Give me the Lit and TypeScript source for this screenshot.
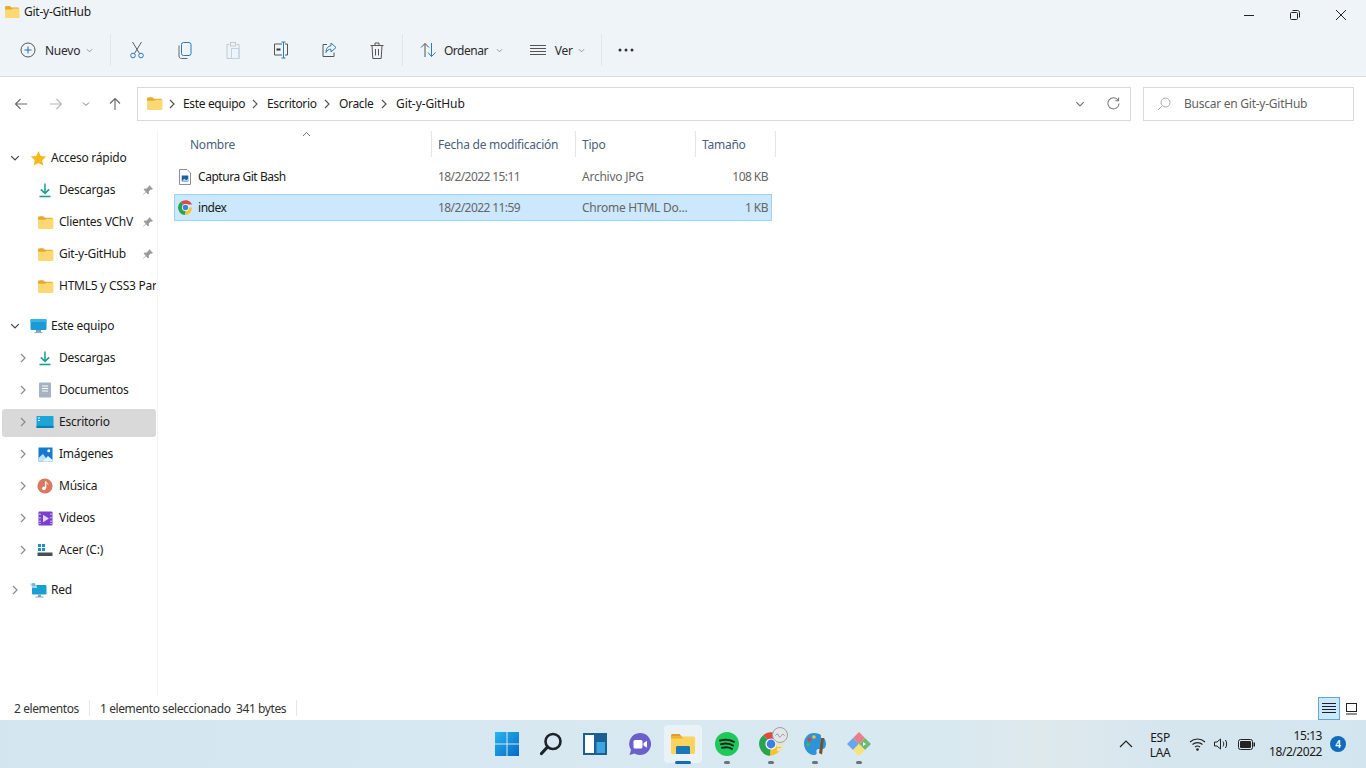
import { html, css, LitElement, nothing } from 'lit';
import { customElement } from 'lit/decorators.js';

// small shared icons
const folder = (size = 16) => html`<svg width=${size} height=${size} viewBox="0 0 16 16">
  <path d="M1 3.500C1 2.700 1.600 2 2.400 2h3.500l1.600 1.600h6.200c.8 0 1.300.6 1.300 1.300V6H1z" fill="#e8a92c" />
  <path d="M1 5.400h6.600L9 4.400h5.600c.5 0 .9.4.9.9v7.600c0 .7-.5 1.100-1.100 1.100H2.100C1.500 14 1 13.500 1 12.900z" fill="#fcd873" />
</svg>`;

const chevronDown = (c = '#666', s = 8) => html`<svg width=${s} height=${s} viewBox="0 0 8 8">
  <path d="M1 2.500l3 3 3-3" fill="none" stroke=${c} stroke-width="1" />
</svg>`;

const chevronRight = (c = '#8a8a8a') => html`<svg width="8" height="10" viewBox="0 0 8 10">
  <path d="M2 1l4 4-4 4" fill="none" stroke=${c} stroke-width="1.200" />
</svg>`;

const download = html`<svg width="16" height="16" viewBox="0 0 16 16">
  <path d="M8 1.500v9.500M3.800 7.400L8 11.400l4.200-4" fill="none" stroke="#1f9d8f" stroke-width="1.500" />
  <path d="M2.500 14.500h11" stroke="#1f9d8f" stroke-width="1.600" />
</svg>`;

const pin = html`<svg width="12" height="12" viewBox="0 0 12 12">
  <path d="M7 1l4 4-1 .6-1.200-.2L6.800 7.600 7 9.500 6 10.400 4 8.200 1.500 10.800 1 10.400l2.700-2.700L1.600 5.600l1-1 1.800.2 2.200-2.200z" fill="#9a9a9a" />
</svg>`;

const star = html`<svg width="17" height="17" viewBox="0 0 17 17">
  <path d="M8.500 1l2.300 5 5.400.6-4 3.600 1.100 5.400-4.800-2.700-4.800 2.700 1.100-5.400-4-3.600 5.400-.6z" fill="#f6b91d" />
</svg>`;

const monitor = html`<svg width="17" height="16" viewBox="0 0 17 16">
  <rect x="0.500" y="1" width="16" height="11" rx="1.200" fill="#1b9ad6" />
  <rect x="0.500" y="1" width="16" height="3" rx="1.200" fill="#35b4e8" />
  <path d="M6 12h5v2H6z" fill="#7fa3b8" /><path d="M4.500 14h8v1h-8z" fill="#8fb0c2" />
</svg>`;

const docs = html`<svg width="14" height="16" viewBox="0 0 14 16">
  <rect x="1" y="0.500" width="12" height="15" rx="0.800" fill="#a5b2c0" />
  <path d="M4 4h6M4 6.500h6M4 9h6" stroke="#fff" stroke-width="1" />
</svg>`;

const desktop = html`<svg width="18" height="14" viewBox="0 0 18 14">
  <rect x="0.500" y="1" width="17" height="12" rx="0.800" fill="#1ca6d8" />
  <rect x="0.500" y="10.800" width="17" height="2.200" fill="#0f7fb2" />
  <path d="M2 3h2M2 5.500h2" stroke="#fff" stroke-width="1.200" />
</svg>`;

const images = html`<svg width="15" height="15" viewBox="0 0 15 15">
  <rect x="0.500" y="0.500" width="14" height="14" fill="#1579d0" />
  <circle cx="10.800" cy="3.800" r="1.500" fill="#fff" />
  <path d="M0.500 14.500V11l4.500-4 5.500 7.500z" fill="#bfe4fa" /><path d="M5 14.500L10 9l4.500 4v1.500z" fill="#e7f6ff" />
</svg>`;

const music = html`<svg width="16" height="16" viewBox="0 0 16 16">
  <circle cx="8" cy="8" r="7.600" fill="#d9785f" />
  <path d="M8.600 3.500v6.600" stroke="#fff" stroke-width="1.300" /><path d="M8.600 3.500c.5 1.500 2 1.600 2.400 3" fill="none" stroke="#fff" stroke-width="1" />
  <circle cx="6.900" cy="10.400" r="1.800" fill="#fff" />
</svg>`;

const videos = html`<svg width="15" height="15" viewBox="0 0 15 15">
  <rect x="0.500" y="0.500" width="14" height="14" rx="1" fill="#7b3fd0" />
  <path d="M5 3.800l6 3.700-6 3.700z" fill="#e6d5fb" />
  <path d="M2 2.500v1.600M2 6v1.600M2 9.500v1.600M2 12v1M13 2.500v1.600M13 6v1.600M13 9.500v1.600M13 12v1" stroke="#e6d5fb" stroke-width="1.100" />
</svg>`;

const drive = html`<svg width="16" height="14" viewBox="0 0 16 14">
  <path d="M1 1h3v3H1zM5 1h3v3H5zM1 5h3v3H1zM5 5h3v3H5z" fill="#1a8fc8" />
  <rect x="0.500" y="9.500" width="15" height="3.500" fill="#4a4f55" />
</svg>`;

const network = html`<svg width="18" height="17" viewBox="0 0 18 17">
  <rect x="3" y="3" width="14.500" height="9.500" rx="1" fill="#18a0d2" />
  <path d="M9 12.500h3v2H9zM6.500 14.500h8v1h-8z" fill="#7fa3b8" />
  <path d="M1 1.500h5l1.200 1.500 1 3H3.500z" fill="#9fdcf2" /><path d="M3 1h3v3H3z" fill="#5a9ec0" opacity=".6" />
</svg>`;

const fileJpg = html`<svg width="14" height="16" viewBox="0 0 14 16">
  <path d="M1.500.5h7.500l3.500 3.500v11.500h-11z" fill="#fff" stroke="#8b8f94" />
  <rect x="3.700" y="6.500" width="6.600" height="6" fill="#1d5fa0" />
  <path d="M3.700 12.500l2.500-3 2 1.700 2.100-1.800v3.100z" fill="#9ed0f0" />
</svg>`;

const chrome = (size = 16) => html`<svg width=${size} height=${size} viewBox="0 0 24 24">
  <path d="M12 12L4.500 2.900A11.800 11.800 0 0 1 22.600 7H12z" fill="#de4a3c" />
  <path d="M12 12H22.600A11.800 11.800 0 0 1 11 23.800z" fill="#f6c42b" />
  <path d="M12 12L11 23.800A11.800 11.800 0 0 1 4.500 2.900z" fill="#2ca24f" />
  <circle cx="12" cy="12" r="5.600" fill="#fff" /><circle cx="12" cy="12" r="4.400" fill="#3a80e8" />
</svg>`;

@customElement('app-root')
export class AppRoot extends LitElement {
  static styles = css`
    :host {
      display: flex;
      flex-direction: column;
      width: 1366px;
      height: 768px;
      overflow: hidden;
      background: #fff;
      color: #1a1a1a;
      font-family: 'Noto Sans', 'Open Sans', sans-serif;
      font-size: 12px;
      letter-spacing: -0.25px;
      line-height: 16px;
    }
    svg {
      display: block;
      flex: none;
    }

    /* title + command bar */
    .head {
      background: #eff4f9;
      border-bottom: 1px solid #dcdcdc;
      height: 76px;
      flex: none;
    }
    .title {
      display: flex;
      align-items: center;
      height: 24px;
      padding: 0 2px 0 4px;
    }
    .title .name {
      margin-left: 4px;
    }
    .winbtns {
      margin-left: auto;
      display: flex;
      margin-top: 5px;
    }
    .winbtns span {
      width: 46px;
      display: flex;
      justify-content: center;
    }
    .bar {
      display: flex;
      align-items: center;
      height: 52px;
      padding-left: 20px;
    }
    .nuevo {
      display: flex;
      align-items: center;
      width: 90px;
    }
    .bar .label {
      margin-left: 9px;
      padding-top: 2px;
      color: #2b2b2b;
    }
    .bar .caret {
      margin-left: 6px;
    }
    .sep {
      width: 1px;
      height: 32px;
      background: #e2e6ea;
      flex: none;
    }
    .sep.cut {
      margin-right: 2px;
    }
    .sep.mid {
      margin-left: 1px;
    }
    .sep.end {
      margin-left: 16px;
    }
    .tool {
      width: 48px;
      display: flex;
      justify-content: center;
      flex: none;
    }
    .sort {
      display: flex;
      align-items: center;
      flex: none;
    }
    .sort.by {
      margin-left: 17px;
    }
    .sort.by .label {
      margin-left: 7px;
      letter-spacing: -0.5px;
    }
    .sort.by .caret {
      margin-left: 8px;
    }
    .sort.view {
      margin-left: 27px;
    }
    .sort.view .label {
      margin-left: 9px;
    }
    .sort.view .caret {
      margin-left: 5px;
    }

    /* address row */
    .nav {
      display: flex;
      align-items: center;
      height: 53px;
      flex: none;
      padding: 0 12px 0 0;
    }
    .navbtn {
      display: flex;
      justify-content: center;
      flex: none;
    }
    .navbtn.back {
      width: 42px;
    }
    .navbtn.fwd {
      width: 28px;
    }
    .navbtn.hist {
      width: 32px;
    }
    .navbtn.up {
      width: 26px;
    }
    .addr {
      display: flex;
      align-items: center;
      width: 994px;
      height: 34px;
      box-sizing: border-box;
      border: 1px solid #d9d9d9;
      padding-left: 8px;
      margin-left: 9px;
      flex: none;
    }
    .crumb {
      margin: 0 8px 0 7px;
    }
    .crumb.first {
      margin: 0 7px 0 5px;
    }
    .seg {
      white-space: nowrap;
      letter-spacing: -0.35px;
    }
    .c1 {
      width: 61px;
    }
    .c2 {
      width: 49px;
    }
    .c3 {
      width: 34px;
    }
    .c4 {
      width: 69px;
      letter-spacing: -0.1px;
    }
    .addr .tail {
      margin-left: auto;
      display: flex;
      align-items: center;
      gap: 22px;
      padding-right: 10px;
    }
    .search {
      display: flex;
      align-items: center;
      margin-left: 12px;
      width: 211px;
      height: 34px;
      box-sizing: border-box;
      border: 1px solid #d9d9d9;
      padding-left: 13px;
      color: #5f5f5f;
      gap: 13px;
    }

    /* main area */
    .main {
      display: flex;
      flex: 1;
      min-height: 0;
    }
    .side {
      width: 158px;
      box-sizing: border-box;
      flex: none;
      padding-top: 12px;
      border-right: 1px solid #f3f3f3;
      overflow: hidden;
    }
    .row {
      display: flex;
      align-items: center;
      height: 32px;
      white-space: nowrap;
      overflow: hidden;
      position: relative;
      margin: 0 1px 0 0;
      width: 156px;
    }
    .row.sel::before {
      content: '';
      position: absolute;
      left: 2px;
      right: 0;
      top: 3px;
      bottom: 1px;
      border-radius: 3px;
      background: #d9d9d9;
    }
    .row > * {
      position: relative;
    }
    .gap {
      height: 8px;
    }
    .arrow {
      width: 10px;
      flex: none;
      display: flex;
      justify-content: center;
    }
    .ico {
      width: 18px;
      flex: none;
      display: flex;
      justify-content: center;
    }
    .row.l1 {
      padding-left: 10px;
      box-sizing: border-box;
    }
    .row.l1 .ico {
      margin-left: 9px;
    }
    .row.l1 .txt {
      margin-left: 4px;
    }
    .row.l2 {
      padding-left: 18px;
      box-sizing: border-box;
    }
    .row.l2 .ico {
      margin-left: 8px;
    }
    .row.l2 .txt {
      margin-left: 5px;
    }
    .row .pin {
      position: absolute;
      left: 142px;
      top: 10px;
    }

    .list {
      flex: 1;
      padding: 1px 0 0 16px;
      position: relative;
    }
    .cols {
      display: grid;
      grid-template-columns: 258px 144px 120px 80px;
      width: 602px;
      height: 26px;
      align-items: center;
      color: #4c607a;
      position: relative;
      margin-bottom: 6px;
    }
    .cols > span {
      height: 26px;
      line-height: 26px;
      padding: 1px 0 0 6px;
      border-right: 1px solid #e5e5e5;
      box-sizing: border-box;
      white-space: nowrap;
    }
    .cols > span:first-child {
      padding-left: 16px;
    }
    .sortmark {
      position: absolute;
      left: 128px;
      top: 0px;
    }
    .file {
      display: grid;
      grid-template-columns: 258px 144px 120px 76px;
      width: 598px;
      height: 27px;
      box-sizing: border-box;
      align-items: center;
      color: #666;
      white-space: nowrap;
      margin-bottom: 4px;
    }
    .file.selected {
      background: #cce8ff;
      box-shadow: inset 0 0 0 1px #99d1ff;
    }
    .file .fname {
      display: flex;
      align-items: center;
      color: #1a1a1a;
      padding-left: 4px;
      letter-spacing: -0.45px;
    }
    .file .fname svg {
      margin-right: 6px;
    }
    .file .fname svg.cr {
      margin-right: 5px;
    }
    .file .fsize {
      text-align: right;
      padding-right: 4px;
      letter-spacing: -0.55px;
    }
    .file .fdate {
      padding-left: 6px;
      letter-spacing: -0.58px;
    }
    .file .ftype {
      padding-left: 6px;
    }

    /* status */
    .status {
      display: flex;
      align-items: center;
      height: 24px;
      flex: none;
      padding-left: 14px;
      color: #333;
      white-space: nowrap;
      letter-spacing: -0.4px;
    }
    .status .stext {
      padding-top: 2px;
    }
    .vsep {
      width: 1px;
      height: 16px;
      background: #e6e6e6;
      margin: 0 10px;
    }
    .views {
      margin-left: auto;
      display: flex;
      align-items: center;
      padding-right: 4px;
    }
    .vbtn {
      width: 22px;
      height: 23px;
      box-sizing: border-box;
      display: flex;
      align-items: center;
      justify-content: center;
    }
    .vbtn.on {
      background: #cce8ff;
      border: 1px solid #5fa8cf;
    }

    /* taskbar */
    .taskbar {
      height: 48px;
      flex: none;
      display: flex;
      align-items: center;
      background: linear-gradient(90deg, #d3e6ef 0%, #d7e8f1 40%, #d9e9f0 70%, #dfe9ec 76%, #d6e6ef 85%, #d3e5ee 100%);
      position: relative;
    }
    .apps {
      display: flex;
      margin-left: 485px;
    }
    .app {
      width: 44px;
      height: 38px;
      display: flex;
      align-items: center;
      justify-content: center;
      position: relative;
      flex: none;
    }
    .app.active::before {
      content: '';
      position: absolute;
      left: 3px;
      right: 3px;
      top: 0;
      bottom: 0;
      border-radius: 4px;
      background: #e9f2f7;
    }
    .app > * {
      position: relative;
    }
    .app .dot {
      position: absolute;
      bottom: -1px;
      left: 50%;
      margin-left: -3px;
      width: 6px;
      height: 3px;
      border-radius: 2px;
      background: #6b7378;
    }
    .app.active .dot {
      width: 16px;
      margin-left: -8px;
      background: #0f6cbd;
    }
    .app .overlay {
      position: absolute;
      left: 21px;
      top: 2px;
    }
    .tray {
      margin-left: auto;
      display: flex;
      align-items: center;
      color: #1a1a1a;
      height: 48px;
      padding-right: 44px;
    }
    .lang {
      text-align: center;
      width: 40px;
      line-height: 15px;
      margin: 2px 9px 0 7px;
    }
    .clock {
      text-align: right;
      line-height: 16px;
      margin-left: 13px;
      letter-spacing: -0.45px;
    }
    .icons {
      display: flex;
      align-items: center;
      gap: 7px;
    }
    .batt {
      margin-left: 1px;
    }
    .badge {
      position: absolute;
      right: 20px;
      top: 16px;
      width: 16px;
      height: 16px;
      border-radius: 50%;
      background: #0f6cbd;
      color: #fff;
      font-size: 10px;
      font-weight: 600;
      line-height: 16px;
      text-align: center;
      letter-spacing: 0;
    }
  `;

  private sideRow(level: 'l1' | 'l2', arrow: 'down' | 'right' | null, icon: unknown, text: string, pinned = false, sel = false) {
    return html`<div class="row ${level} ${sel ? 'sel' : ''}">
      <span class="arrow">${arrow === 'down' ? chevronDown('#444', 10) : arrow === 'right' ? chevronRight() : nothing}</span>
      <span class="ico">${icon}</span>
      <span class="txt">${text}</span>
      ${pinned ? html`<span class="pin">${pin}</span>` : nothing}
    </div>`;
  }

  private head() {
    return html`<div class="head">
      <div class="title">
        ${folder()}
        <span class="name">Git-y-GitHub</span>
        <div class="winbtns">
          <span><svg width="12" height="12" viewBox="0 0 12 12"><path d="M1 6.500h10" stroke="#222" /></svg></span>
          <span><svg width="12" height="12" viewBox="0 0 12 12"><rect x="1.500" y="3.500" width="7" height="7" rx="1" fill="none" stroke="#222" /><path d="M3.500 1.500h5c1.200 0 2 .8 2 2v5" fill="none" stroke="#222" /></svg></span>
          <span><svg width="12" height="12" viewBox="0 0 12 12"><path d="M1 1l10 10M11 1L1 11" stroke="#222" /></svg></span>
        </div>
      </div>
      <div class="bar">
        <div class="nuevo">
          <svg width="16" height="16" viewBox="0 0 16 16"><circle cx="8" cy="8" r="7" fill="none" stroke="#555" /><path d="M8 4.500v7M4.500 8h7" stroke="#1f6fb0" /></svg>
          <span class="label">Nuevo</span>
          <span class="caret">${chevronDown('#8a8a8a', 7)}</span>
        </div>
        <div class="sep cut"></div>
        <div class="tool">
          <svg width="16" height="18" viewBox="0 0 16 18"><path d="M3.500 1l7 11.500M12.500 1l-7 11.500" fill="none" stroke="#5a6068" /><circle cx="4" cy="14.500" r="2.300" fill="none" stroke="#2a7ab8" /><circle cx="12" cy="14.500" r="2.300" fill="none" stroke="#2a7ab8" /></svg>
        </div>
        <div class="tool">
          <svg width="14" height="17" viewBox="0 0 14 17"><rect x="3.500" y="0.500" width="9.500" height="13" rx="2" fill="none" stroke="#2a7ab8" /><path d="M1 3.500v10.500c0 1.500 1 2.500 2.500 2.500h6" fill="none" stroke="#666" /></svg>
        </div>
        <div class="tool">
          <svg width="14" height="17" viewBox="0 0 14 17"><path d="M3.500 2.500H1v14h12v-14h-2.500" fill="none" stroke="#c3c9cf" /><rect x="4.500" y="0.500" width="5" height="3.500" fill="none" stroke="#c3c9cf" /><rect x="5.500" y="6.500" width="7.500" height="10" fill="none" stroke="#bcd4e6" /></svg>
        </div>
        <div class="tool">
          <svg width="16" height="18" viewBox="0 0 16 18"><path d="M9 3H1.500v11H9M12 3h2.500v11H12" fill="none" stroke="#555" /><path d="M10.500 1v16M8.500 1h4M8.500 17h4" fill="none" stroke="#2a7ab8" /><path d="M3.500 8.500h4" stroke="#333" stroke-width="2" /></svg>
        </div>
        <div class="tool">
          <svg width="16" height="16" viewBox="0 0 16 16"><path d="M6 2.500H2v12h11v-4" fill="none" stroke="#555" /><path d="M10 1l5 4.500-5 4.500V7.200C7.600 7.200 6 8.500 5 10.500 5 6.500 7 4 10 3.800z" fill="none" stroke="#2a7ab8" /></svg>
        </div>
        <div class="tool">
          <svg width="14" height="17" viewBox="0 0 14 17"><path d="M.5 3.500h13M5 3.500V1h4v2.500M2 3.500l.8 13h8.400l.8-13M5.500 7v6.500M8.500 7v6.500" fill="none" stroke="#555" /></svg>
        </div>
        <div class="sep mid"></div>
        <div class="sort by">
          <svg width="17" height="16" viewBox="0 0 17 16"><path d="M5 15V1.500M1 5.500l4-4 4 4" fill="none" stroke="#555" /><path d="M11.500 1v13.500M8 10.500l3.500 4 4-4" fill="none" stroke="#2a7ab8" /></svg>
          <span class="label">Ordenar</span>
          <span class="caret">${chevronDown('#8a8a8a', 7)}</span>
        </div>
        <div class="sort view">
          <svg width="16" height="12" viewBox="0 0 16 12"><path d="M0 1.500h16M0 4.500h16M0 7.500h16M0 10.500h16" stroke="#555" /></svg>
          <span class="label">Ver</span>
          <span class="caret">${chevronDown('#8a8a8a', 7)}</span>
        </div>
        <div class="sep end"></div>
        <div class="tool">
          <svg width="16" height="4" viewBox="0 0 16 4"><circle cx="2" cy="2" r="1.500" fill="#333" /><circle cx="8" cy="2" r="1.500" fill="#333" /><circle cx="14" cy="2" r="1.500" fill="#333" /></svg>
        </div>
      </div>
    </div>`;
  }

  private nav() {
    const sep = html`<span class="crumb">${chevronRight('#555')}</span>`;
    return html`<div class="nav">
      <span class="navbtn back"><svg width="14" height="14" viewBox="0 0 14 14"><path d="M13 7H1.500M6.500 2l-5 5 5 5" fill="none" stroke="#666" stroke-width="1.100" /></svg></span>
      <span class="navbtn fwd"><svg width="14" height="14" viewBox="0 0 14 14"><path d="M1 7h11.500M7.500 2l5 5-5 5" fill="none" stroke="#b5b5b5" stroke-width="1.100" /></svg></span>
      <span class="navbtn hist">${chevronDown('#777', 8)}</span>
      <span class="navbtn up"><svg width="14" height="14" viewBox="0 0 14 14"><path d="M7 13V1.500M2 6.500l5-5 5 5" fill="none" stroke="#666" stroke-width="1.100" /></svg></span>
      <div class="addr">
        ${folder(17)}
        <span class="crumb first">${chevronRight('#555')}</span>
        <span class="seg c1">Este equipo</span>${sep}
        <span class="seg c2">Escritorio</span>${sep}
        <span class="seg c3">Oracle</span>${sep}
        <span class="seg c4">Git-y-GitHub</span>
        <div class="tail">
          ${chevronDown('#777', 10)}
          <svg width="13" height="13" viewBox="0 0 14 14"><path d="M12 3.500A6 6 0 1 0 13 7" fill="none" stroke="#777" stroke-width="1.100" /><path d="M12.500 .5v3.500H9" fill="none" stroke="#777" stroke-width="1.100" /></svg>
        </div>
      </div>
      <div class="search">
        <svg width="14" height="14" viewBox="0 0 14 14"><circle cx="8.500" cy="5.500" r="4.500" fill="none" stroke="#aaa" /><path d="M5 9L1 13" stroke="#aaa" /></svg>
        <span>Buscar en Git-y-GitHub</span>
      </div>
    </div>`;
  }

  private sidebar() {
    return html`<aside class="side">
      ${this.sideRow('l1', 'down', star, 'Acceso rápido')}
      ${this.sideRow('l2', null, download, 'Descargas', true)}
      ${this.sideRow('l2', null, folder(17), 'Clientes VChV', true)}
      ${this.sideRow('l2', null, folder(17), 'Git-y-GitHub', true)}
      ${this.sideRow('l2', null, folder(17), 'HTML5 y CSS3 Parte 1')}
      <div class="gap"></div>
      ${this.sideRow('l1', 'down', monitor, 'Este equipo')}
      ${this.sideRow('l2', 'right', download, 'Descargas')}
      ${this.sideRow('l2', 'right', docs, 'Documentos')}
      ${this.sideRow('l2', 'right', desktop, 'Escritorio', false, true)}
      ${this.sideRow('l2', 'right', images, 'Imágenes')}
      ${this.sideRow('l2', 'right', music, 'Música')}
      ${this.sideRow('l2', 'right', videos, 'Videos')}
      ${this.sideRow('l2', 'right', drive, 'Acer (C:)')}
      <div class="gap"></div>
      ${this.sideRow('l1', 'right', network, 'Red')}
    </aside>`;
  }

  private list() {
    return html`<section class="list">
      <div class="cols">
        <span>Nombre</span><span>Fecha de modificación</span><span>Tipo</span><span>Tamaño</span>
        <svg class="sortmark" width="9" height="6" viewBox="0 0 9 6"><path d="M1 5l3.500-3.500L8 5" fill="none" stroke="#777" /></svg>
      </div>
      <div class="file">
        <span class="fname">${fileJpg}Captura Git Bash</span>
        <span class="fdate">18/2/2022 15:11</span><span class="ftype">Archivo JPG</span><span class="fsize">108 KB</span>
      </div>
      <div class="file selected">
        <span class="fname">${html`<svg class="cr" width="15" height="15" viewBox="0 0 24 24">
          <path d="M12 12L4.500 2.900A11.800 11.800 0 0 1 22.600 7H12z" fill="#de4a3c" />
          <path d="M12 12H22.600A11.800 11.800 0 0 1 11 23.800z" fill="#f6c42b" />
          <path d="M12 12L11 23.800A11.800 11.800 0 0 1 4.500 2.900z" fill="#2ca24f" />
          <circle cx="12" cy="12" r="5.600" fill="#fff" /><circle cx="12" cy="12" r="4.400" fill="#3a80e8" />
        </svg>`}index</span>
        <span class="fdate">18/2/2022 11:59</span><span class="ftype">Chrome HTML Do...</span><span class="fsize">1 KB</span>
      </div>
    </section>`;
  }

  private status() {
    return html`<div class="status">
      <span class="stext">2 elementos</span><span class="vsep"></span>
      <span class="stext">1 elemento seleccionado&nbsp; 341 bytes</span><span class="vsep"></span>
      <div class="views">
        <span class="vbtn on"><svg width="14" height="12" viewBox="0 0 14 12"><path d="M0 1.500h14M0 4.500h14M0 7.500h14M0 10.500h14" stroke="#222" /></svg></span>
        <span class="vbtn"><svg width="13" height="13" viewBox="0 0 13 13"><rect x="1.500" y="1.500" width="10" height="8" fill="none" stroke="#222" /><path d="M1 12h11" stroke="#222" /></svg></span>
      </div>
    </div>`;
  }

  private taskbar() {
    return html`<div class="taskbar">
      <div class="apps">
        <div class="app">
          <svg width="24" height="24" viewBox="0 0 24 24"><defs><linearGradient id="w" x1="0" y1="0" x2="1" y2="1"><stop offset="0" stop-color="#29b6f0" /><stop offset="1" stop-color="#0668c4" /></linearGradient></defs><path d="M0 0h11.500v11.500H0zM12.500 0H24v11.500H12.500zM0 12.500h11.500V24H0zM12.500 12.500H24V24H12.500z" fill="url(#w)" /></svg>
        </div>
        <div class="app">
          <svg width="24" height="24" viewBox="0 0 24 24"><circle cx="14" cy="9.500" r="7.500" fill="none" stroke="#1d2327" stroke-width="2.600" /><path d="M8.500 15l-6 6.500" stroke="#1d2327" stroke-width="3.200" stroke-linecap="round" /></svg>
        </div>
        <div class="app">
          <svg width="24" height="24" viewBox="0 0 24 24"><rect x="0" y="1" width="24" height="22" fill="#1c5f93" /><rect x="2" y="3" width="9" height="18" fill="#fff" /><rect x="13.500" y="3" width="8.500" height="9" fill="#1c5f93" /><rect x="13.500" y="10" width="8.500" height="11" fill="#3fa5e0" /></svg>
        </div>
        <div class="app">
          <svg width="24" height="24" viewBox="0 0 24 24"><path d="M13 1a11 11 0 1 1-5.500 20.500L2.500 23l1.500-5A11 11 0 0 1 13 1z" fill="#6b5fc9" /><rect x="6.500" y="8" width="9" height="8.500" rx="1.500" fill="#fff" /><path d="M16.500 11l3.500-2.200v7l-3.500-2.200z" fill="#fff" /></svg>
        </div>
        <div class="app active">
          <svg width="24" height="24" viewBox="0 0 24 24"><path d="M0 3.500C0 2.700.7 2 1.500 2h7l2.500 3h-11z" fill="#dfa01e" /><rect x="0" y="4.500" width="24" height="17.500" rx="1.200" fill="#fcd35c" /><path d="M0 4.500h10.500l1.500 2H0z" fill="#eab22f" /><path d="M5 15.500c0-1 .7-1.500 1.500-1.500h11c.8 0 1.500.5 1.500 1.500V22H5z" fill="#1c77b8" /></svg>
          <span class="dot"></span>
        </div>
        <div class="app">
          <svg width="24" height="24" viewBox="0 0 24 24"><circle cx="12" cy="12" r="12" fill="#1ec95b" /><path d="M5 8.500c4.500-1.300 9.800-1 14 1.300M6 12.300c4-1.100 8.500-.8 12 1.200M7 15.800c3.300-.9 7-.7 10 1" fill="none" stroke="#10291a" stroke-width="2" stroke-linecap="round" /></svg>
          <span class="dot"></span>
        </div>
        <div class="app">
          ${chrome(24)}
          <svg class="overlay" width="18" height="28" viewBox="0 0 18 28"><circle cx="10" cy="8" r="7.500" fill="#e3e6e8" stroke="#9aa0a5" /><path d="M5.500 8.500c1.500-2 2.500-2 3 0s2 1.500 3 0 2-1.500 3 0" fill="none" stroke="#8a9095" /><path d="M5 16h10l-2 4H7zM7 21h6v3H7z" fill="#e9e3bf" /></svg>
          <span class="dot"></span>
        </div>
        <div class="app">
          <svg width="24" height="24" viewBox="0 0 24 24"><path d="M11 1C5 1 1 6 1 11.500S5 23 11 23c2.500 0 3-1.500 2.500-3-.5-1.700.5-3 2.500-3h3c2.500 0 4-2 4-5C23 5.500 17.500 1 11 1z" fill="#2f93d8" /><circle cx="6.500" cy="7.500" r="2" fill="#d8473d" /><circle cx="11" cy="5" r="1.800" fill="#f3c12b" /><circle cx="5" cy="12.500" r="1.800" fill="#4db35a" /><path d="M18.500 5L16 21l3 1.500L21 6z" fill="#7a4f2d" /><path d="M17.800 1h3.500l-.3 5h-3z" fill="#e9e3da" /></svg>
          <span class="dot"></span>
        </div>
        <div class="app">
          <svg width="24" height="24" viewBox="0 0 24 24"><path d="M12 0l6 6-6 6-6-6z" fill="#e8808a" /><path d="M18 6l6 6-6 6-6-6z" fill="#6cbb70" /><path d="M6 6l6 6-6 6-6-6z" fill="#6aa6ee" /><path d="M12 12l6 6-6 6-6-6z" fill="#f6e27a" /><path d="M16 10l3 2-3 2z" fill="#fff" /></svg>
          <span class="dot"></span>
        </div>
      </div>
      <div class="tray">
        <svg width="14" height="8" viewBox="0 0 14 8"><path d="M1 7l6-6 6 6" fill="none" stroke="#222" stroke-width="1.200" /></svg>
        <div class="lang">ESP<br />LAA</div>
        <div class="icons">
          <svg width="17" height="14" viewBox="0 0 17 14"><path d="M1 5a11 11 0 0 1 15 0M3.500 7.500a7.500 7.500 0 0 1 10 0M6 10a4 4 0 0 1 5 0" fill="none" stroke="#222" stroke-width="1.100" /><circle cx="8.500" cy="12.500" r="1.300" fill="#222" /></svg>
          <svg width="17" height="14" viewBox="0 0 17 14"><path d="M1.500 5v4h2.500l3.500 3V2L4 5z" fill="none" stroke="#222" /><path d="M10 4.500c1 1.500 1 3.500 0 5M12.500 3c1.500 2.500 1.500 5.500 0 8" fill="none" stroke="#222" /></svg>
          <svg class="batt" width="18" height="11" viewBox="0 0 18 11"><rect x="0.500" y="0.500" width="14" height="10" rx="2" fill="none" stroke="#222" /><rect x="2" y="2" width="11" height="7" rx="1" fill="#222" /><rect x="15.500" y="3.500" width="1.500" height="4" fill="#222" /></svg>
        </div>
        <div class="clock">15:13<br />18/2/2022</div>
        <div class="badge">4</div>
      </div>
    </div>`;
  }

  render() {
    return html`
      ${this.head()} ${this.nav()}
      <div class="main">${this.sidebar()} ${this.list()}</div>
      ${this.status()} ${this.taskbar()}
    `;
  }
}
